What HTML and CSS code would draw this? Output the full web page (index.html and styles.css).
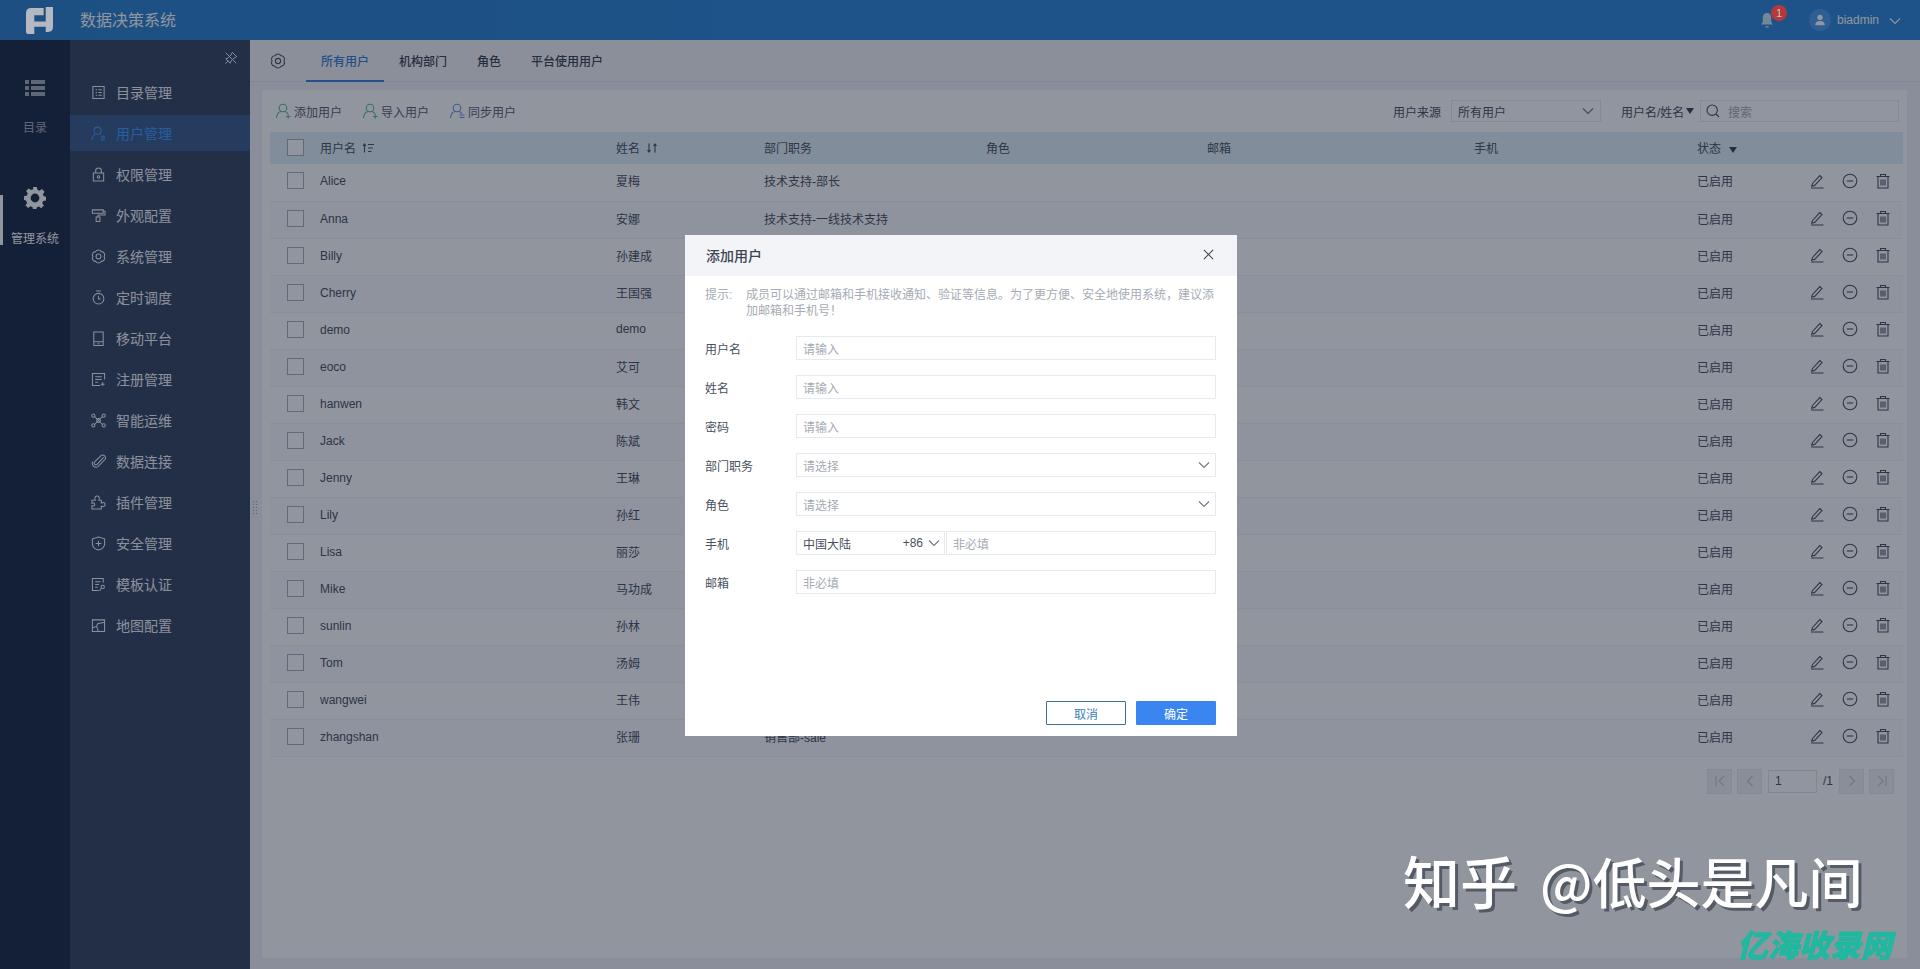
FILE: index.html
```html
<!DOCTYPE html>
<html>
<head>
  <meta charset="utf-8">
  <title>数据决策系统</title>
  <link rel="stylesheet" href="styles.css">
</head>
<body>
  <svg class="defs" width="0" height="0">
    <symbol id="i-edit" viewBox="0 0 16 16"><path d="M3.5 10.5 10.8 2.6l2.2 2-7.3 7.8-3 .8zM2 15h12.5"/></symbol>
    <symbol id="i-minus" viewBox="0 0 16 16"><circle cx="8" cy="8" r="6.8"/><path d="M4.8 8h6.4"/></symbol>
    <symbol id="i-trash" viewBox="0 0 16 16"><path d="M1.500 3.500h13M5.500 3.500V1.500h5v2M3 3.500V15h10V3.500M6 6.500v6M8 6.500v6M10 6.500v6"/></symbol>
    <symbol id="i-chev" viewBox="0 0 12 8"><path d="M1 1.500 6 6.500l5-5"/></symbol>
    <symbol id="i-user" viewBox="0 0 16 16"><circle cx="8" cy="5" r="3.800"/><path d="M1.500 15c.4-4 2.500-6.200 4.500-6.500M10 8.500c1.300.4 2.300 1.200 3 2.500"/></symbol>
    <symbol id="i-gear" viewBox="0 0 16 16"><path d="M14 8A3.400 3.400 0 0 1 11 13.200A3.400 3.400 0 0 1 5 13.200A3.400 3.400 0 0 1 2 8A3.400 3.400 0 0 1 5 2.800A3.400 3.400 0 0 1 11 2.800A3.400 3.400 0 0 1 14 8z"/><circle cx="8" cy="8" r="2.600"/></symbol>
  </svg>

  <header class="topbar">
    <svg class="logo" viewBox="0 0 26 26"><path d="M0 6q0-5 5-5h12v7H8v6h11V0h7v19q0 5-5 5h-2v-5H8v7H2q-2 0-2-2z"/></svg>
    <span class="app-title">数据决策系统</span>
    <span class="bell">
      <svg viewBox="0 0 14 16"><path d="M7 1c3 0 4.200 2.300 4.200 5v4l1.800 2.500H1L2.800 10V6C2.800 3.300 4 1 7 1zM5.500 14h3v1.500h-3z"/></svg>
      <span class="badge">1</span>
    </span>
    <span class="avatar"><svg viewBox="0 0 16 16"><circle cx="8" cy="5" r="3"/><path d="M2.500 14c0-3.500 2-5 5.500-5s5.500 1.500 5.500 5z"/></svg></span>
    <span class="username">biadmin</span>
    <svg class="user-chev"><use href="#i-chev"></use></svg>
  </header>

  <div class="body-wrap">
    <nav class="rail">
      <a class="rail-item">
        <svg class="rail-icon" viewBox="0 0 20 16"><path d="M0 0h4v4H0zM6 0h14v4H6zM0 6h4v4H0zM6 6h14v4H6zM0 12h4v4H0zM6 12h14v4H6z"/></svg>
        <span>目录</span>
      </a>
      <a class="rail-item rail-active">
        <svg class="rail-icon" viewBox="0 0 20 20"><path fill-rule="evenodd" d="M8.300 0h3.400l.5 2.600 1.900.8 2.200-1.500 2.400 2.400-1.500 2.200.8 1.900 2 .5v3.400l-2.600.5-.8 1.900 1.500 2.200-2.400 2.400-2.200-1.500-1.900.8-.5 2.400H8.300l-.5-2.600-1.900-.8-2.200 1.500-2.400-2.400 1.500-2.200-.8-1.900L0 11.700V8.300l2.600-.5.8-1.900-1.500-2.200 2.400-2.400 2.200 1.500 1.900-.8zM10 6a4 4 0 1 0 0 8 4 4 0 0 0 0-8z"/></svg>
        <span>管理系统</span>
      </a>
    </nav>

    <aside class="sidebar">
      <svg class="pin" viewBox="0 0 16 16"><path d="M9.500 1.500 14.500 6.500 11.500 8 8 11.500 7 14 2 9l2.500-1L8 4.500zM5 11l-3.500 3.500M2 2l12 12"/></svg>
      <a class="side-item"><svg viewBox="0 0 16 16"><path d="M2 1.500h12v13H2zM5 5h1.500M8 5h3.500M5 8h1.500M8 8h3.500M5 11h1.500M8 11h3.500"/></svg>目录管理</a>
      <a class="side-item side-active"><svg viewBox="0 0 16 16"><circle cx="7" cy="5" r="3.800"/><path d="M1 15c.3-3.800 2-5.700 4-6.300M9 8.800h.5M10.500 11h4.500M10.500 13h4.500M10.500 15h4.500"/></svg>用户管理</a>
      <a class="side-item"><svg viewBox="0 0 16 16"><path d="M2.500 6.500h11v8.500h-11zM5 6.500V4a3 3 0 0 1 6 0v2.500"/><circle cx="8" cy="10.700" r="1.300"/></svg>权限管理</a>
      <a class="side-item"><svg viewBox="0 0 16 16"><path d="M1.500 2h11.500v3.500H1.500zM13 3.500h2v4H7.500v2M5.500 9.500h4v5h-4z"/></svg>外观配置</a>
      <a class="side-item"><svg><use href="#i-gear"></use></svg>系统管理</a>
      <a class="side-item"><svg viewBox="0 0 16 16"><circle cx="8" cy="9.300" r="5.700"/><path d="M5.500 1h5M8 6v3.500h2.500"/></svg>定时调度</a>
      <a class="side-item"><svg viewBox="0 0 16 16"><path d="M3 1h10v14.500H3zM3 11.500h10M7 13.500h2"/></svg>移动平台</a>
      <a class="side-item"><svg viewBox="0 0 16 16"><path d="M14.500 8V1.500h-13v13h8.500M4.500 5h7M4.500 8h7M4.500 11h3M12.500 11v4M10.500 13h4"/></svg>注册管理</a>
      <a class="side-item"><svg viewBox="0 0 16 16"><circle cx="2.500" cy="2.800" r="1.700"/><circle cx="13.500" cy="2.800" r="1.700"/><circle cx="2.500" cy="13.200" r="1.700"/><circle cx="13.500" cy="13.200" r="1.700"/><circle cx="8" cy="8" r="2"/><path d="M4 4 12 12M12 4 4 12"/></svg>智能运维</a>
      <a class="side-item"><svg viewBox="0 0 16 16"><path d="M13.500 3.500 6.500 11a1.800 1.800 0 0 1-2.600-2.500l6.700-6.800a3 3 0 0 1 4.200 4.200L7.500 13.500A4 4 0 0 1 2 8"/></svg>数据连接</a>
      <a class="side-item"><svg viewBox="0 0 16 16"><path d="M1 5.500h3.500c-1-3 .2-4.500 2-4.500s3 1.500 2 4.500H11v3c2.500-1 4-.2 4 1.500s-1.500 3-4 2v3H1v-3.500c2 .7 3-.2 3-1.300s-1-2-3-1.300z"/></svg>插件管理</a>
      <a class="side-item"><svg viewBox="0 0 16 16"><path d="M8 1 14.500 3v5.500c0 3-3 5.500-6.500 6.500-3.500-1-6.500-3.500-6.500-6.500V3zM8 5v6M5 8h6"/></svg>安全管理</a>
      <a class="side-item"><svg viewBox="0 0 16 16"><path d="M13 6V1.500H1.500v13H9M4.500 5h5.500M4.500 8h4M4.500 11h2.500"/><circle cx="12.500" cy="10.500" r="1.800"/><path d="m11 12-1.500 2.500"/></svg>模板认证</a>
      <a class="side-item"><svg viewBox="0 0 16 16"><path d="M1.500 2h13v12.500h-13zM1.500 10.500 6 9l1-3 7.500-1.500M6 9l2 5.500"/></svg>地图配置</a>
    </aside>

    <main class="main">
      <div class="tabs">
        <svg class="tabs-gear"><use href="#i-gear"></use></svg>
        <a class="tab tab-active">所有用户</a>
        <a class="tab">机构部门</a>
        <a class="tab">角色</a>
        <a class="tab">平台使用用户</a>
      </div>

      <div class="gutter">
        <span class="resizer"></span>
        <section class="card">
          <div class="toolbar">
            <a class="tool tool-green"><svg><use href="#i-user"></use><path d="M11 13.500h4.500M13.200 11.200v4.500"/></svg>添加用户</a>
            <a class="tool tool-green"><svg><use href="#i-user"></use><path d="M11 13.500h4.500M13.200 11.200v4.500"/></svg>导入用户</a>
            <a class="tool tool-blue"><svg><use href="#i-user"></use><path d="M10.500 12h5M10.500 14.500h5"/></svg>同步用户</a>
            <span class="filter-label">用户来源</span>
            <span class="select-box">所有用户<svg class="chev"><use href="#i-chev"></use></svg></span>
            <span class="filter-type">用户名/姓名<i class="tri"></i></span>
            <span class="search-box">
              <svg viewBox="0 0 14 14"><circle cx="6.200" cy="6.200" r="5.200"/><path d="m10 10 3 3"/></svg>
              <span>搜索</span>
            </span>
          </div>

          <table class="users">
            <colgroup>
              <col class="c-check"><col class="c-name"><col class="c-real"><col class="c-dept">
              <col class="c-role"><col class="c-mail"><col class="c-phone"><col class="c-state"><col class="c-ops">
            </colgroup>
            <thead>
              <tr>
                <th><span class="check"></span></th>
                <th>用户名<svg class="sort" viewBox="0 0 12 10"><path d="M2.500 9.500V1M1 3l1.500-2L4 3M6 1.500h6M6 5h5M6 8.500h3.500"/></svg></th>
                <th>姓名<svg class="sort" viewBox="0 0 12 10"><path d="M3 .5V9M1.500 7 3 9l1.500-2M9 9.500V1M7.500 3 9 1l1.500 2"/></svg></th>
                <th>部门职务</th>
                <th>角色</th>
                <th>邮箱</th>
                <th>手机</th>
                <th>状态<i class="tri tri-state"></i></th>
                <th></th>
              </tr>
            </thead>
            <tbody>
              <tr><td><span class="check"></span></td><td>Alice</td><td>夏梅</td><td>技术支持-部长</td><td></td><td></td><td></td><td>已启用</td><td class="ops"><svg><use href="#i-edit"></use></svg><svg><use href="#i-minus"></use></svg><svg><use href="#i-trash"></use></svg></td></tr>
              <tr><td><span class="check"></span></td><td>Anna</td><td>安娜</td><td>技术支持-一线技术支持</td><td></td><td></td><td></td><td>已启用</td><td class="ops"><svg><use href="#i-edit"></use></svg><svg><use href="#i-minus"></use></svg><svg><use href="#i-trash"></use></svg></td></tr>
              <tr><td><span class="check"></span></td><td>Billy</td><td>孙建成</td><td></td><td></td><td></td><td></td><td>已启用</td><td class="ops"><svg><use href="#i-edit"></use></svg><svg><use href="#i-minus"></use></svg><svg><use href="#i-trash"></use></svg></td></tr>
              <tr><td><span class="check"></span></td><td>Cherry</td><td>王国强</td><td></td><td></td><td></td><td></td><td>已启用</td><td class="ops"><svg><use href="#i-edit"></use></svg><svg><use href="#i-minus"></use></svg><svg><use href="#i-trash"></use></svg></td></tr>
              <tr><td><span class="check"></span></td><td>demo</td><td>demo</td><td></td><td></td><td></td><td></td><td>已启用</td><td class="ops"><svg><use href="#i-edit"></use></svg><svg><use href="#i-minus"></use></svg><svg><use href="#i-trash"></use></svg></td></tr>
              <tr><td><span class="check"></span></td><td>eoco</td><td>艾可</td><td></td><td></td><td></td><td></td><td>已启用</td><td class="ops"><svg><use href="#i-edit"></use></svg><svg><use href="#i-minus"></use></svg><svg><use href="#i-trash"></use></svg></td></tr>
              <tr><td><span class="check"></span></td><td>hanwen</td><td>韩文</td><td></td><td></td><td></td><td></td><td>已启用</td><td class="ops"><svg><use href="#i-edit"></use></svg><svg><use href="#i-minus"></use></svg><svg><use href="#i-trash"></use></svg></td></tr>
              <tr><td><span class="check"></span></td><td>Jack</td><td>陈斌</td><td></td><td></td><td></td><td></td><td>已启用</td><td class="ops"><svg><use href="#i-edit"></use></svg><svg><use href="#i-minus"></use></svg><svg><use href="#i-trash"></use></svg></td></tr>
              <tr><td><span class="check"></span></td><td>Jenny</td><td>王琳</td><td></td><td></td><td></td><td></td><td>已启用</td><td class="ops"><svg><use href="#i-edit"></use></svg><svg><use href="#i-minus"></use></svg><svg><use href="#i-trash"></use></svg></td></tr>
              <tr><td><span class="check"></span></td><td>Lily</td><td>孙红</td><td></td><td></td><td></td><td></td><td>已启用</td><td class="ops"><svg><use href="#i-edit"></use></svg><svg><use href="#i-minus"></use></svg><svg><use href="#i-trash"></use></svg></td></tr>
              <tr><td><span class="check"></span></td><td>Lisa</td><td>丽莎</td><td></td><td></td><td></td><td></td><td>已启用</td><td class="ops"><svg><use href="#i-edit"></use></svg><svg><use href="#i-minus"></use></svg><svg><use href="#i-trash"></use></svg></td></tr>
              <tr><td><span class="check"></span></td><td>Mike</td><td>马功成</td><td></td><td></td><td></td><td></td><td>已启用</td><td class="ops"><svg><use href="#i-edit"></use></svg><svg><use href="#i-minus"></use></svg><svg><use href="#i-trash"></use></svg></td></tr>
              <tr><td><span class="check"></span></td><td>sunlin</td><td>孙林</td><td></td><td></td><td></td><td></td><td>已启用</td><td class="ops"><svg><use href="#i-edit"></use></svg><svg><use href="#i-minus"></use></svg><svg><use href="#i-trash"></use></svg></td></tr>
              <tr><td><span class="check"></span></td><td>Tom</td><td>汤姆</td><td></td><td></td><td></td><td></td><td>已启用</td><td class="ops"><svg><use href="#i-edit"></use></svg><svg><use href="#i-minus"></use></svg><svg><use href="#i-trash"></use></svg></td></tr>
              <tr><td><span class="check"></span></td><td>wangwei</td><td>王伟</td><td></td><td></td><td></td><td></td><td>已启用</td><td class="ops"><svg><use href="#i-edit"></use></svg><svg><use href="#i-minus"></use></svg><svg><use href="#i-trash"></use></svg></td></tr>
              <tr><td><span class="check"></span></td><td>zhangshan</td><td>张珊</td><td>销售部-sale</td><td></td><td></td><td></td><td>已启用</td><td class="ops"><svg><use href="#i-edit"></use></svg><svg><use href="#i-minus"></use></svg><svg><use href="#i-trash"></use></svg></td></tr>
            </tbody>
          </table>

          <div class="pager">
            <a class="page-btn"><svg viewBox="0 0 12 12"><path d="M2 1v10M10 1 5 6l5 5"/></svg></a>
            <a class="page-btn"><svg viewBox="0 0 12 12"><path d="M8.500 1 3.500 6l5 5"/></svg></a>
            <span class="page-input">1</span>
            <span class="page-total">/1</span>
            <a class="page-btn"><svg viewBox="0 0 12 12"><path d="M3.500 1l5 5-5 5"/></svg></a>
            <a class="page-btn"><svg viewBox="0 0 12 12"><path d="M10 1v10M2 1l5 5-5 5"/></svg></a>
          </div>
        </section>
      </div>
    </main>
  </div>

  <div class="mask">
    <div class="modal">
      <div class="modal-head">
        <span>添加用户</span>
        <svg class="modal-close" viewBox="0 0 12 12"><path d="M1 1l10 10M11 1 1 11"/></svg>
      </div>
      <div class="modal-body">
        <div class="tip">
          <span class="tip-label">提示:</span>
          <p>成员可以通过邮箱和手机接收通知、验证等信息。为了更方便、安全地使用系统，建议添加邮箱和手机号！</p>
        </div>
        <div class="field"><label>用户名</label><span class="input">请输入</span></div>
        <div class="field"><label>姓名</label><span class="input">请输入</span></div>
        <div class="field"><label>密码</label><span class="input">请输入</span></div>
        <div class="field"><label>部门职务</label><span class="input">请选择<svg class="chev"><use href="#i-chev"></use></svg></span></div>
        <div class="field"><label>角色</label><span class="input">请选择<svg class="chev"><use href="#i-chev"></use></svg></span></div>
        <div class="field">
          <label>手机</label>
          <span class="phone-code"><b>中国大陆</b><b class="code">+86</b><svg class="chev"><use href="#i-chev"></use></svg></span>
          <span class="input phone-input">非必填</span>
        </div>
        <div class="field"><label>邮箱</label><span class="input">非必填</span></div>
      </div>
      <div class="modal-foot">
        <a class="btn btn-ghost">取消</a>
        <a class="btn btn-primary">确定</a>
      </div>
    </div>
  </div>

  <div class="wm-zhihu"><span class="wm-big">知乎</span><span>@低头是凡间</span></div>
  <div class="wm-site">亿海收录网</div>
</body>
</html>
```

FILE: styles.css
```css
html, body {
  height: 100%;
  margin: 0;
  overflow: hidden;
}

body {
  display: flex;
  flex-direction: column;
  font-family: "Liberation Sans", "Noto Sans CJK SC", sans-serif;
  font-size: 12px;
  color: #4a5060;
  background: #f1f3f7;
}

.defs {
  position: absolute;
}

svg {
  fill: none;
  stroke: currentColor;
  stroke-width: 1.1;
}

/* top bar */
.topbar {
  flex: none;
  height: 40px;
  display: flex;
  align-items: center;
  padding-left: 26px;
  background: linear-gradient(90deg, #2c80cc, #2d87d8 40%);
  color: #fff;
}

.logo {
  position: relative;
  z-index: 11;
  width: 27px;
  height: 27px;
  fill: #b4b8c0;
  stroke: none;
}

.app-title {
  margin: 0 0 3px 27px;
  font-size: 16px;
  flex: 1;
}

.bell {
  position: relative;
  width: 14px;
  height: 16px;
  margin-right: 35px;
}

.bell svg {
  display: block;
  width: 14px;
  height: 16px;
  fill: #cfe2f5;
  stroke: none;
}

.badge {
  position: absolute;
  z-index: 11;
  left: 11px;
  top: -7px;
  width: 16px;
  height: 16px;
  border-radius: 50%;
  background: #b3393b;
  color: #c8ccd2;
  font-size: 11px;
  line-height: 16px;
  text-align: center;
}

.avatar {
  width: 22px;
  height: 22px;
  border-radius: 50%;
  background: #4d9bea;
  display: flex;
  align-items: center;
  justify-content: center;
}

.avatar svg {
  width: 14px;
  height: 14px;
  fill: #fff;
  stroke: none;
}

.username {
  margin-left: 6px;
}

.user-chev {
  width: 12px;
  height: 8px;
  margin: 1px 19px 0 10px;
}

/* body */
.body-wrap {
  flex: 1;
  display: flex;
  min-height: 0;
}

.rail {
  flex: none;
  width: 70px;
  background: #1c2845;
  color: #fff;
  padding-top: 40px;
  box-sizing: border-box;
}

.rail-item {
  display: flex;
  flex-direction: column;
  align-items: center;
  height: 54px;
  gap: 22px;
  opacity: .6;
}

.rail-active {
  position: relative;
  margin-top: 53px;
  opacity: 1;
  gap: 20px;
}

.rail-active::before {
  content: "";
  position: absolute;
  left: 0;
  top: 8px;
  width: 3px;
  height: 50px;
  background: #fff;
}

.rail-icon {
  fill: currentColor;
  stroke: none;
  width: 20px;
  height: 16px;
  flex: none;
}

.rail-active .rail-icon {
  width: 22px;
  height: 22px;
}

.sidebar {
  flex: none;
  width: 180px;
  background: #374562;
  color: #f4f6f9;
  padding-top: 34px;
  box-sizing: border-box;
  position: relative;
}

.pin {
  position: absolute;
  right: 12px;
  top: 11px;
  width: 14px;
  height: 14px;
}

.side-item {
  display: flex;
  align-items: center;
  height: 36px;
  margin-bottom: 5px;
  padding-left: 21px;
  font-size: 14px;
}

.side-item svg {
  width: 15px;
  height: 15px;
  margin-right: 10px;
}

.side-active {
  background: #3d5d8c;
  color: #3d9bff;
}

/* main */
.main {
  flex: 1;
  min-width: 0;
  display: flex;
  flex-direction: column;
}

.tabs {
  flex: none;
  height: 42px;
  display: flex;
  align-items: flex-start;
  padding-left: 20px;
  box-sizing: border-box;
  background: #f4f5f8;
  border-bottom: 1px solid #e4e7ec;
}

.tabs-gear {
  width: 16px;
  height: 16px;
  margin: 13px 20px 0 0;
}

.tab {
  padding: 0 15px;
  height: 42px;
  line-height: 44px;
  font-weight: 500;
  color: #3d4350;
  box-sizing: border-box;
}

.tab-active {
  color: #3a80d8;
  border-bottom: 2px solid #3a80d8;
}

.gutter {
  flex: 1;
  position: relative;
  padding: 8px 13px 11px 12px;
  min-height: 0;
  display: flex;
}

.resizer {
  position: absolute;
  left: 2px;
  top: 418px;
  width: 6px;
  height: 14px;
  background: radial-gradient(circle, #9aa0ac 1px, transparent 1px) 0 0 / 3px 3px;
}

.card {
  flex: 1;
  min-width: 0;
  background: #fff;
  padding: 0 4px 0 8px;
}

.toolbar {
  height: 42px;
  display: flex;
  align-items: center;
}

.tool {
  display: flex;
  align-items: center;
  margin-right: 15px;
  padding-left: 5px;
  color: #5a6070;
}

.tool svg {
  width: 16px;
  height: 16px;
  margin-right: 3px;
  overflow: visible;
}

.tool svg use {
  width: 16px;
  height: 16px;
}

.tool-green svg {
  color: #5cc088;
}

.tool-blue svg {
  color: #6a94e0;
}

.filter-label {
  margin-left: auto;
  margin-right: 10px;
}

.select-box {
  width: 150px;
  height: 22px;
  box-sizing: border-box;
  border: 1px solid #e6e9ee;
  display: flex;
  align-items: center;
  justify-content: space-between;
  padding: 0 6px;
}

.chev {
  width: 12px;
  height: 8px;
  flex: none;
  color: #6f7684;
}

.filter-type {
  margin-left: 20px;
  display: flex;
  align-items: center;
  gap: 2px;
  width: 79px;
}

.tri {
  display: inline-block;
  border: 4.5px solid transparent;
  border-top: 6px solid #3d4350;
  border-bottom: 0;
}

.tri-state {
  margin-left: 8px;
}

.search-box {
  width: 199px;
  height: 22px;
  margin-right: 4px;
  box-sizing: border-box;
  border: 1px solid #e6e9ee;
  display: flex;
  align-items: center;
  padding-left: 5px;
  gap: 8px;
  color: #a8adb7;
}

.search-box svg {
  width: 14px;
  height: 14px;
  color: #4a5060;
}

/* table */
.users {
  width: 1633px;
  table-layout: fixed;
  border-collapse: collapse;
}

.c-check { width: 50px; }
.c-name { width: 296px; }
.c-real { width: 148px; }
.c-dept { width: 222px; }
.c-role { width: 221px; }
.c-mail { width: 267px; }
.c-phone { width: 223px; }
.c-state { width: 108px; }
.c-ops { width: 98px; }

.users th {
  height: 32px;
  padding: 0 0 1px;
  text-align: left;
  font-weight: 400;
  background: #e3f0fb;
  box-sizing: border-box;
}

.users td {
  height: 37px;
  padding: 0 0 3px;
  box-sizing: border-box;
  border-bottom: 1px solid #f0f2f5;
}

/* latin names sit lower than the CJK cells, so they need less lift */
.users td:nth-child(2) {
  padding-bottom: 2px;
}

.users tr:nth-child(even) td {
  background: #fafbfd;
}

.check {
  display: block;
  width: 15px;
  height: 15px;
  margin-left: 17px;
  border: 1px solid #aab0bb;
  background: #fff;
}

.sort {
  width: 12px;
  height: 10px;
  margin-left: 6px;
}

.ops {
  white-space: nowrap;
}

.ops svg {
  width: 16px;
  height: 16px;
  margin: 0 17px 0 4px;
  display: inline-block;
  vertical-align: middle;
}

.ops svg + svg {
  margin-left: 0;
}

/* pager */
.pager {
  display: flex;
  justify-content: flex-end;
  align-items: center;
  gap: 5px;
  margin: 12px 9px 0 0;
}

.page-btn {
  width: 25px;
  height: 25px;
  box-sizing: border-box;
  display: flex;
  align-items: center;
  justify-content: center;
  background: #f0f2f5;
  border: 1px solid #e6e9ee;
  color: #c3c8d0;
}

.page-btn svg {
  width: 12px;
  height: 12px;
}

.page-input {
  width: 49px;
  height: 23px;
  box-sizing: border-box;
  border: 1px solid #e0e3e9;
  line-height: 21px;
  padding-left: 6px;
  margin-left: 1px;
}

.page-total {
  width: 12px;
  text-align: center;
}

/* modal */
.mask {
  position: fixed;
  z-index: 10;
  inset: 0;
  background: rgba(10, 20, 40, .45);
  display: flex;
  align-items: center;
  justify-content: center;
  padding: 2px 0 0 2px;
  box-sizing: border-box;
}

.modal {
  width: 552px;
  height: 501px;
  background: #fff;
  display: flex;
  flex-direction: column;
  color: #4a5060;
}

.modal-head {
  flex: none;
  height: 41px;
  padding: 0 23px 2px 21px;
  box-sizing: border-box;
  background: #f2f4f7;
  display: flex;
  align-items: center;
  justify-content: space-between;
  font-size: 14px;
  font-weight: 500;
  color: #3d4350;
}

.modal-close {
  width: 11px;
  height: 11px;
}

.modal-body {
  flex: 1;
  padding: 11px 21px 0 20px;
}

.tip {
  display: flex;
  line-height: 16px;
  color: #a6abb4;
  margin-bottom: 17px;
}

.tip-label {
  flex: none;
  width: 41px;
}

.tip p {
  margin: 0;
}

.field {
  display: flex;
  align-items: center;
  height: 24px;
  margin-bottom: 15px;
}

.field label {
  flex: none;
  width: 91px;
}

.input {
  flex: 1;
  height: 24px;
  box-sizing: border-box;
  border: 1px solid #e6e9ee;
  display: flex;
  align-items: center;
  justify-content: space-between;
  padding: 0 5px 0 6px;
  color: #a6abb4;
}

.phone-code {
  flex: none;
  width: 149px;
  height: 24px;
  box-sizing: border-box;
  border: 1px solid #e6e9ee;
  display: flex;
  align-items: center;
  padding: 0 4px 0 6px;
}

.phone-code b {
  font-weight: 400;
}

.phone-code .code {
  margin-left: auto;
  margin-right: 5px;
}

.phone-input {
  margin-left: 1px;
}

.modal-foot {
  flex: none;
  display: flex;
  justify-content: flex-end;
  gap: 10px;
  padding: 0 21px 11px 0;
}

.btn {
  width: 80px;
  height: 24px;
  box-sizing: border-box;
  display: flex;
  align-items: center;
  justify-content: center;
  border-radius: 1px;
}

.btn-ghost {
  border: 1px solid #3a6f9e;
  color: #3a80c0;
}

.btn-primary {
  background: #3a86f0;
  color: #fff;
}

/* image watermarks */
.wm-zhihu {
  position: fixed;
  z-index: 12;
  left: 1403px;
  top: 839px;
  display: flex;
  align-items: baseline;
  gap: 23px;
  font-family: "Noto Sans CJK SC", sans-serif;
  font-size: 54px;
  line-height: 80px;
  font-weight: 500;
  color: #fff;
  text-shadow: 3px 3px 0 #555b66;
  white-space: nowrap;
}

.wm-big {
  font-size: 57px;
}

.wm-site {
  position: fixed;
  z-index: 12;
  left: 1737px;
  top: 924px;
  font-family: "Noto Sans CJK SC", sans-serif;
  font-size: 31px;
  line-height: 40px;
  font-weight: 900;
  font-style: italic;
  color: #1fb8a0;
  -webkit-text-stroke: .6px #1fb8a0;
  white-space: nowrap;
}
```
